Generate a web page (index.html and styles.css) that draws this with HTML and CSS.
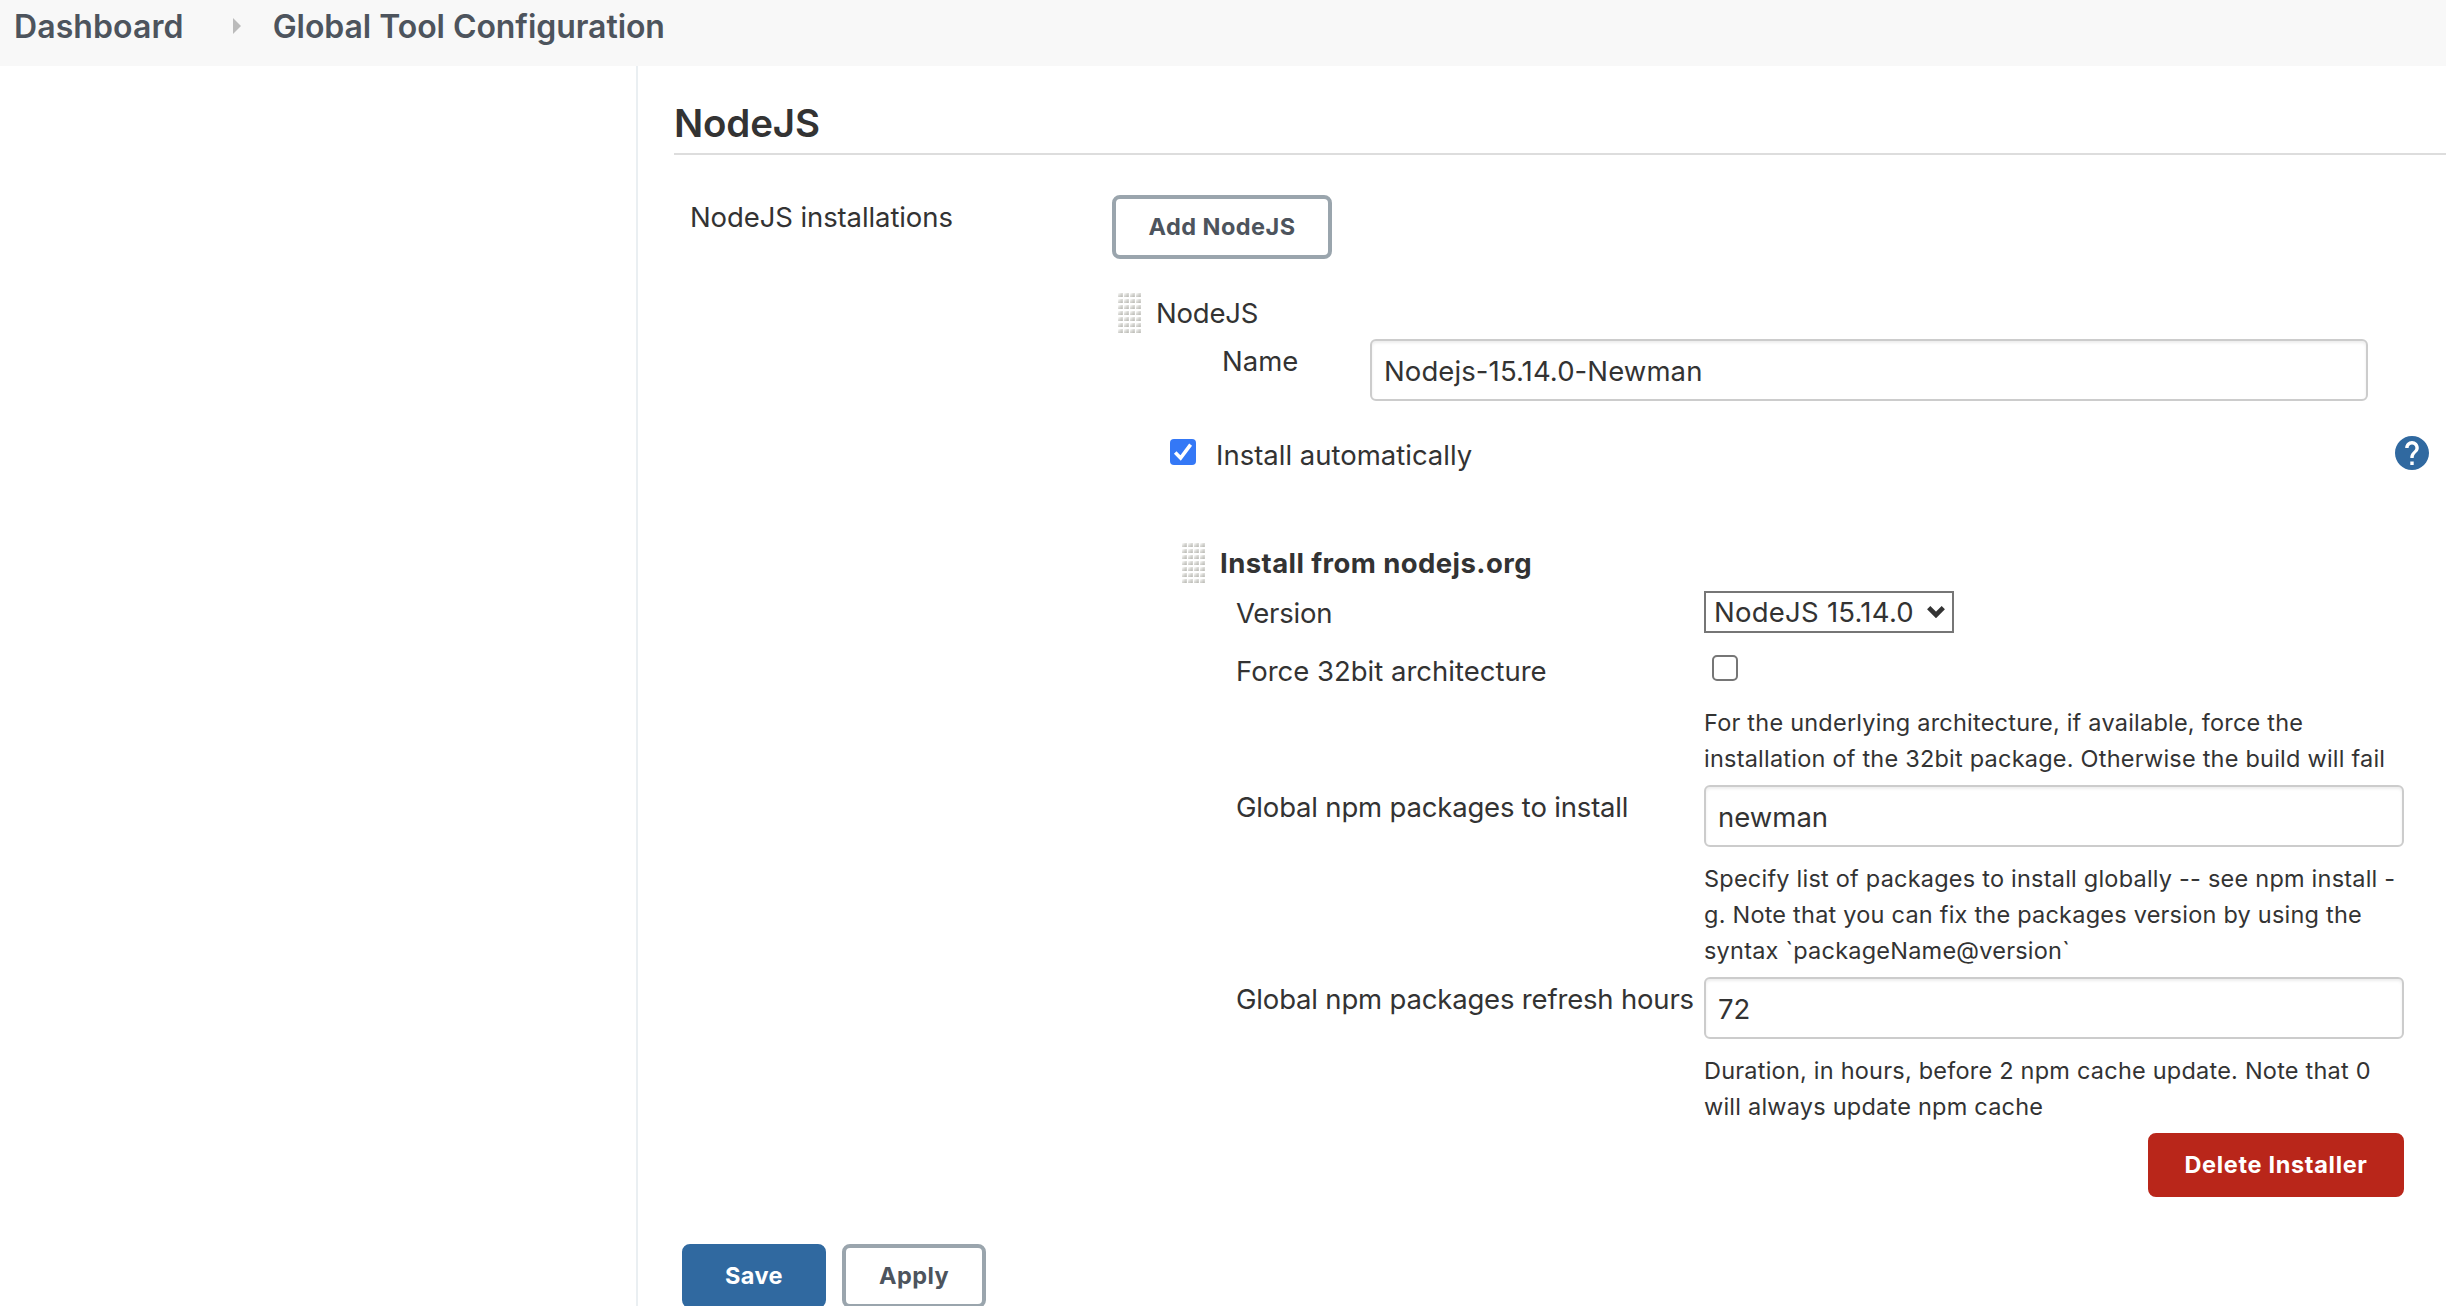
FILE: index.html
```
<!DOCTYPE html>
<html lang="en">
<head>
<meta charset="utf-8">
<title>Global Tool Configuration</title>
<link rel="stylesheet" href="styles.css">
</head>
<body>
<svg class="defs" width="0" height="0" aria-hidden="true">
  <defs>
    <linearGradient id="dot" x1="0" y1="0" x2="1" y2="1">
      <stop offset="0.1" stop-color="#f8f8f6"/>
      <stop offset="0.5" stop-color="#d6d6d2"/>
      <stop offset="1" stop-color="#b4b4ae"/>
    </linearGradient>
    <pattern id="dots" width="6" height="6" patternUnits="userSpaceOnUse">
      <rect x="0" y="2" width="4.8" height="4" fill="url(#dot)"/>
    </pattern>
    <symbol id="grip" viewBox="0 0 23 42"><rect width="23" height="42" fill="url(#dots)"/></symbol>
  </defs>
</svg>

<header class="breadcrumbs">
  <a class="crumb">Dashboard</a>
  <svg class="crumb-arrow" width="8" height="16" viewBox="0 0 8 16"><path d="M0 0L8 8L0 16Z" fill="#bbb"/></svg>
  <a class="crumb crumb-current">Global Tool Configuration</a>
</header>

<div class="page">
  <aside class="side-panel"></aside>
  <main class="content">
    <h1 class="section-title">NodeJS</h1>

    <div class="setting">
      <div class="setting-label">NodeJS installations</div>
      <div class="setting-main">
        <button class="btn btn-add">Add NodeJS</button>

        <div class="chunk-head">
          <svg class="grip"><use href="#grip"/></svg>
          <span class="chunk-title">NodeJS</span>
        </div>

        <div class="name-row">
          <label class="row-label">Name</label>
          <input class="text-input name-input" type="text" value="Nodejs-15.14.0-Newman">
        </div>

        <div class="auto-row">
          <svg class="check" width="26" height="26" viewBox="0 0 26 26"><rect width="26" height="26" rx="4" fill="#3478f6"/><path d="M5.2 13.6L10.6 19L20.6 5.6" fill="none" stroke="#fff" stroke-width="3.6"/></svg>
          <label>Install automatically</label>
          <svg class="help" width="34" height="34" viewBox="2 2 20 20"><path fill="#3069a0" d="M12 2C6.48 2 2 6.48 2 12s4.48 10 10 10 10-4.480 10-10S17.520 2 12 2zm1 17h-2v-2h2v2zm2.070-7.750l-.9.920C13.450 12.900 13 13.500 13 15h-2v-.5c0-1.100.45-2.100 1.170-2.830l1.240-1.260c.37-.36.590-.86.590-1.410 0-1.100-.9-2-2-2s-2 .9-2 2H8c0-2.210 1.790-4 4-4s4 1.790 4 4c0 .88-.36 1.680-.93 2.250z"/></svg>
        </div>

        <div class="chunk-head installer-head">
          <svg class="grip"><use href="#grip"/></svg>
          <b class="installer-title">Install from nodejs.org</b>
        </div>

        <div class="installer">
          <label class="row-label version">Version</label>
          <div class="select">
            <select><option>NodeJS 15.14.0</option></select>
            <svg class="select-arrow" width="18" height="12" viewBox="0 0 18 12"><path d="M1.700 1.700L9 9L16.300 1.700" fill="none" stroke="#333" stroke-width="4.600"/></svg>
          </div>

          <label class="force-label">Force 32bit architecture</label>
          <div class="force-cell">
            <span class="checkbox"></span>
            <p class="description">For the underlying architecture, if available, force the<br>installation of the 32bit package. Otherwise the build will fail</p>
          </div>

          <label class="row-label packages">Global npm packages to install</label>
          <div>
            <input class="text-input" type="text" value="newman">
            <p class="description below-input">Specify list of packages to install globally -- see npm install -<br>g. Note that you can fix the packages version by using the<br>syntax `packageName@version`</p>
          </div>

          <label class="row-label packages">Global npm packages refresh hours</label>
          <div>
            <input class="text-input" type="text" value="72">
            <p class="description below-input">Duration, in hours, before 2 npm cache update. Note that 0<br>will always update npm cache</p>
          </div>
        </div>

        <button class="btn btn-danger">Delete Installer</button>
      </div>
    </div>

    <div class="actions">
      <button class="btn btn-primary">Save</button>
      <button class="btn">Apply</button>
    </div>
  </main>
</div>
</body>
</html>
```
FILE: styles.css
```
* { box-sizing: border-box; }

body {
  margin: 0;
  height: 1306px;
  overflow: hidden;
  background: #fff;
  color: #333;
  font: 27.5px/40px Inter, "Liberation Sans", sans-serif;
}

svg { display: block; flex: none; }
.defs { position: absolute; }

.breadcrumbs {
  display: flex;
  height: 66px;
  padding: 7px 14px;
  background: #f8f8f8;
}
.crumb {
  color: #4d545d;
  font-size: 32px;
  font-weight: 600;
  letter-spacing: 0.1px;
}
.crumb-current { letter-spacing: -0.06px; }
.crumb-arrow { margin: 11px 32px 0 49px; }

.page { display: flex; height: 1242px; }
.side-panel { flex: none; width: 638px; border-right: 2px solid #eaeff2; }
.content { flex: 1; padding: 33px 0 0 36px; }

.section-title {
  margin: 0;
  padding-bottom: 6px;
  border-bottom: 2px solid #ddd;
  font-size: 38.5px;
  font-weight: 600;
  line-height: 48px;
  letter-spacing: -0.15px;
}

.setting {
  display: grid;
  grid-template-columns: 422px 1fr;
  margin-top: 40px;
  padding-left: 16px;
}
.setting-label { padding-top: 2px; letter-spacing: -0.1px; }
.setting-main { display: flex; flex-direction: column; }

.btn {
  height: 64px;
  padding: 0;
  border: 4px solid #9aa5ad;
  border-radius: 8px;
  background: #fff;
  color: #4d545d;
  font: 700 23.5px/36px Inter, "Liberation Sans", sans-serif;
  letter-spacing: 0.45px;
}
.btn-add { width: 220px; }
.btn-danger {
  align-self: flex-end;
  width: 256px;
  margin-right: 42px;
  border-color: #b9261a;
  background: #b9261a;
  color: #fff;
  letter-spacing: 0.68px;
}
.btn-primary { border-color: #3069a0; background: #3069a0; color: #fff; }

.chunk-head {
  display: flex;
  gap: 15px;
  height: 42px;
  margin-top: 32px;
  padding: 2px 0 0 6px;
}
.chunk-title { letter-spacing: -0.2px; }
.grip { width: 23px; height: 42px; margin-top: -2px; }

.row-label { padding-top: 2px; }

.name-row {
  display: grid;
  grid-template-columns: 148px 998px;
  margin-top: 6px;
  padding-left: 110px;
}

.text-input {
  display: block;
  width: 100%;
  height: 62px;
  padding: 1px 12px 0;
  border: 2px solid #ccc;
  border-radius: 6px;
  background: #fff;
  box-shadow: inset 0 2px 3px rgba(0, 0, 0, 0.075);
  color: #333;
  font: inherit;
}
.name-input { letter-spacing: 0.1px; }

.auto-row {
  display: flex;
  height: 40px;
  margin-top: 34px;
  padding: 0 17px 0 58px;
}
.check { margin: 4px 20px 0 0; }
.help { margin: 1px 0 0 auto; }

.installer-head { margin-top: 66px; padding-left: 70px; }
.installer-title { font-weight: 700; letter-spacing: 0.42px; }

.installer {
  display: grid;
  grid-template-columns: 468px 700px;
  margin-top: 8px;
  padding-left: 124px;
}

.version { letter-spacing: -0.25px; }

.select {
  display: grid;
  grid-template-rows: 42px;
  width: 250px;
  height: 42px;
  margin-bottom: 18px;
}
.select select {
  grid-area: 1 / 1;
  height: 42px;
  appearance: none;
  padding: 0 0 0 8px;
  border: 2px solid #767676;
  border-radius: 0;
  background: #fff;
  color: #333;
  font: inherit;
  line-height: 38px;
  letter-spacing: 0.25px;
}
.select-arrow { grid-area: 1 / 1; justify-self: end; margin: 15px 9px 0 0; }

.force-cell { padding-top: 4px; margin-bottom: 8px; }
.checkbox {
  display: block;
  width: 26px;
  height: 26px;
  margin: 0 0 24px 8px;
  border: 2px solid #767676;
  border-radius: 5px;
}

.description {
  margin: 0;
  font-size: 23.5px;
  line-height: 36px;
  letter-spacing: 0.22px;
  white-space: nowrap;
}
.below-input { padding: 14px 0 8px; }
.packages { letter-spacing: -0.18px; }

.actions { display: flex; gap: 16px; margin-top: 47px; padding-left: 8px; }
.actions .btn { width: 144px; }
```
